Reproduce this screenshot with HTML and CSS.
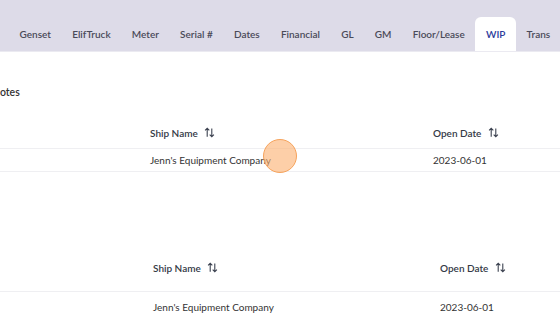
FILE: index.html
```html
<!DOCTYPE html>
<html lang="en">
<head>
<meta charset="UTF-8">
<title>WIP</title>
<link rel="stylesheet" href="styles.css">
</head>
<body>
<div class="tabs">
    <div class="tab">Genset</div>
    <div class="tab">ElifTruck</div>
    <div class="tab">Meter</div>
    <div class="tab">Serial #</div>
    <div class="tab">Dates</div>
    <div class="tab">Financial</div>
    <div class="tab">GL</div>
    <div class="tab">GM</div>
    <div class="tab">Floor/Lease</div>
    <div class="tab active">WIP</div>
    <div class="tab">Trans</div>
</div>

<div class="content">
    <div class="section-title">Notes</div>

    <div class="grid first">
        <div class="row head">
            <div class="cell ship">Ship Name <svg class="sort" viewBox="0 0 12 12"><path d="M3.5 10.5V1.5M1.2 3.8L3.5 1.5L5.8 3.8M8.5 1.5V10.5M6.2 8.2L8.5 10.5L10.8 8.2"/></svg></div>
            <div class="cell date">Open Date <svg class="sort" viewBox="0 0 12 12"><path d="M3.5 10.5V1.5M1.2 3.8L3.5 1.5L5.8 3.8M8.5 1.5V10.5M6.2 8.2L8.5 10.5L10.8 8.2"/></svg></div>
        </div>
        <div class="row data">
            <div class="cell ship">Jenn's Equipment Company</div>
            <div class="cell date">2023-06-01</div>
        </div>
        <span class="click"></span>
    </div>

    <div class="grid second">
        <div class="row head">
            <div class="cell ship">Ship Name <svg class="sort" viewBox="0 0 12 12"><path d="M3.5 10.5V1.5M1.2 3.8L3.5 1.5L5.8 3.8M8.5 1.5V10.5M6.2 8.2L8.5 10.5L10.8 8.2"/></svg></div>
            <div class="cell date">Open Date <svg class="sort" viewBox="0 0 12 12"><path d="M3.5 10.5V1.5M1.2 3.8L3.5 1.5L5.8 3.8M8.5 1.5V10.5M6.2 8.2L8.5 10.5L10.8 8.2"/></svg></div>
        </div>
        <div class="row data">
            <div class="cell ship">Jenn's Equipment Company</div>
            <div class="cell date">2023-06-01</div>
        </div>
    </div>
</div>
</body>
</html>
```

FILE: styles.css
```css
body {
    font-family: Lato, sans-serif;
    font-size: 10px;
    color: #333;
    margin: 0;
    padding: 0;
    width: 560px;
    height: 315px;
    overflow: hidden;
    background-color: #fff;
}

.tabs {
    display: flex;
    align-items: flex-end;
    height: 51px;
    padding-left: 9px;
    background-color: #dddbe8;
    border-bottom: 1px solid #ebeaf1;
    white-space: nowrap;
    font-size: 10px;
}

.tab {
    height: 34px;
    line-height: 34px;
    padding: 0 10.6px;
    color: #4a4a58;
    font-weight: 600;
}

.tab.active {
    background-color: #fff;
    color: #2b3a9b;
    border-radius: 6px 6px 0 0;
}

.content {
    padding-top: 30px;
}

.section-title {
    margin-left: -8px;
    font-size: 10.5px;
    font-weight: 600;
    color: #333;
    height: 20px;
    line-height: 20px;
}

.grid {
    position: relative;
}

.row {
    display: grid;
    border-bottom: 1px solid #efeff2;
}

.first {
    margin-top: 16px;
}

.first .row {
    grid-template-columns: 150px 283px 1fr;
}

.second {
    margin-top: 72px;
}

.second .row {
    grid-template-columns: 153px 287px 1fr;
}

.cell.ship {
    grid-column: 2;
}

.cell.date {
    grid-column: 3;
}

.row.head {
    height: 30px;
    align-items: center;
    font-weight: 600;
    color: #343a46;
}

.second .row.head {
    height: 47px;
}

.row.data {
    height: 22px;
    align-items: center;
    color: #333;
}

.second .row.data {
    height: 30px;
    border-bottom: none;
}

.sort {
    width: 11px;
    height: 11px;
    margin-left: 4px;
    vertical-align: -1px;
    fill: none;
    stroke: #3c4250;
    stroke-width: 1.2;
}

.click {
    position: absolute;
    left: 263px;
    top: 21px;
    width: 34px;
    height: 34px;
    box-sizing: border-box;
    border-radius: 50%;
    background-color: rgba(251, 175, 110, 0.6);
    border: 1.5px solid #f6a35c;
}
```
